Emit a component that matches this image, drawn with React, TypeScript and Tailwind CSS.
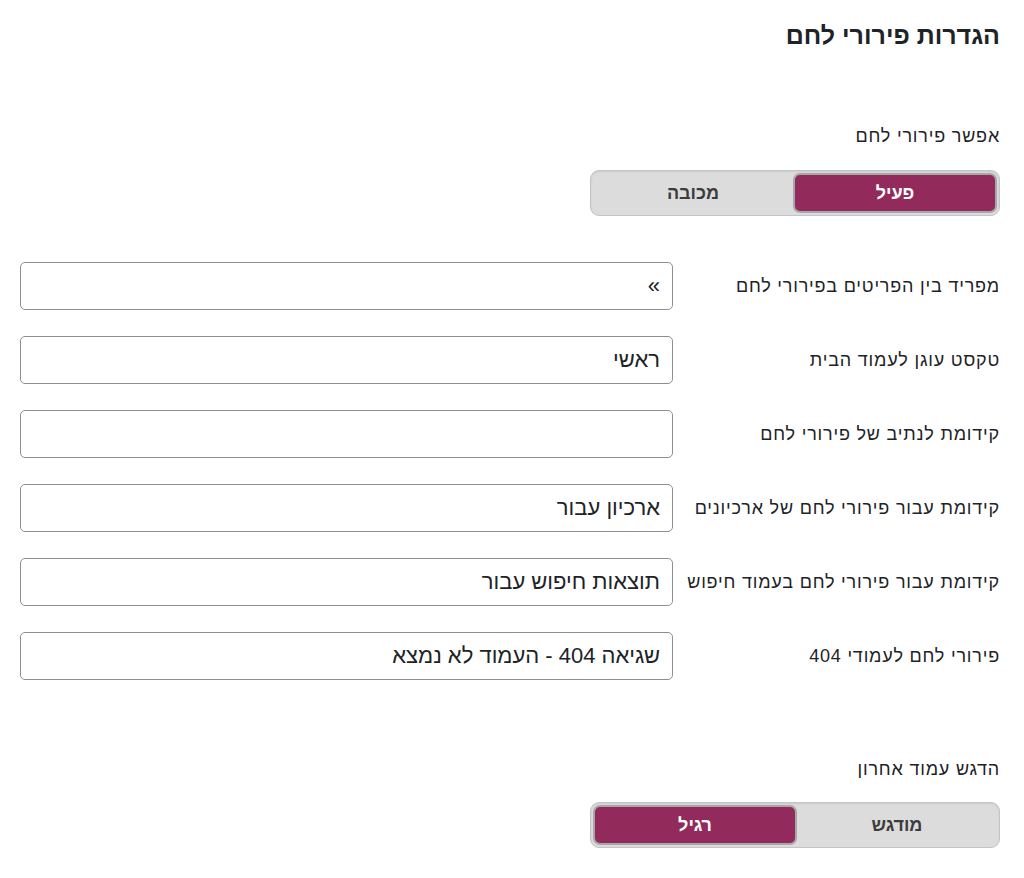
import React from "react";

const font = { fontFamily: '"Liberation Sans", Arial, "DejaVu Sans", sans-serif' };

function Toggle({ options, active }: { options: string[]; active: number }) {
  return (
    <div className="flex h-[46px] w-[410px] rounded-[9px] border border-[#c4c4c4] bg-[#dcdcdc] p-[2px] shadow-[inset_0_1px_2px_rgba(0,0,0,0.08)]">
      {options.map((o, i) => (
        <div
          key={o}
          className={
            i === active
              ? "flex flex-1 items-center justify-center rounded-[7px] border-2 border-[#a7a7a7] bg-[#922b5b] text-[18px] font-bold text-white"
              : "flex flex-1 items-center justify-center text-[18px] font-bold text-[#3c3c3c]"
          }
        >
          {o}
        </div>
      ))}
    </div>
  );
}

const rows = [
  ["מפריד בין הפריטים בפירורי לחם", "»"],
  ["טקסט עוגן לעמוד הבית", "ראשי"],
  ["קידומת לנתיב של פירורי לחם", ""],
  ["קידומת עבור פירורי לחם של ארכיונים", "ארכיון עבור"],
  ["קידומת עבור פירורי לחם בעמוד חיפוש", "תוצאות חיפוש עבור"],
  ["פירורי לחם לעמודי 404", "שגיאה 404 - העמוד לא נמצא"],
];

export default function App() {
  return (
    <div dir="rtl" style={font} className="min-h-[878px] w-[1024px] bg-white pl-[20px] pr-[24px] pt-[21px] text-[#1d2327]">
      <h1 className="text-[25px] font-bold leading-[28px] text-[#1d2327]">הגדרות פירורי לחם</h1>
      <div className="mt-[75px] text-[18px] leading-[24px] tracking-[0.8px]">אפשר פירורי לחם</div>
      <div className="mt-[22px]">
        <Toggle options={["פעיל", "מכובה"]} active={0} />
      </div>
      <div className="mt-[46px] flex flex-col gap-[26px]">
        {rows.map(([label, value]) => (
          <div key={label} className="flex items-center">
            <div className="w-[327px] shrink-0 whitespace-nowrap text-[18px] leading-[24px] tracking-[0.8px]">{label}</div>
            <input
              readOnly
              value={value}
              className="h-[48px] min-w-0 flex-1 rounded-[5px] border border-[#8c8f94] bg-white px-[12px] text-[22px] text-[#1d2327] outline-none"
              style={font}
            />
          </div>
        ))}
      </div>
      <div className="mt-[77px] text-[18px] leading-[24px] tracking-[0.8px]">הדגש עמוד אחרון</div>
      <div className="mt-[21px]">
        <Toggle options={["מודגש", "רגיל"]} active={1} />
      </div>
    </div>
  );
}
